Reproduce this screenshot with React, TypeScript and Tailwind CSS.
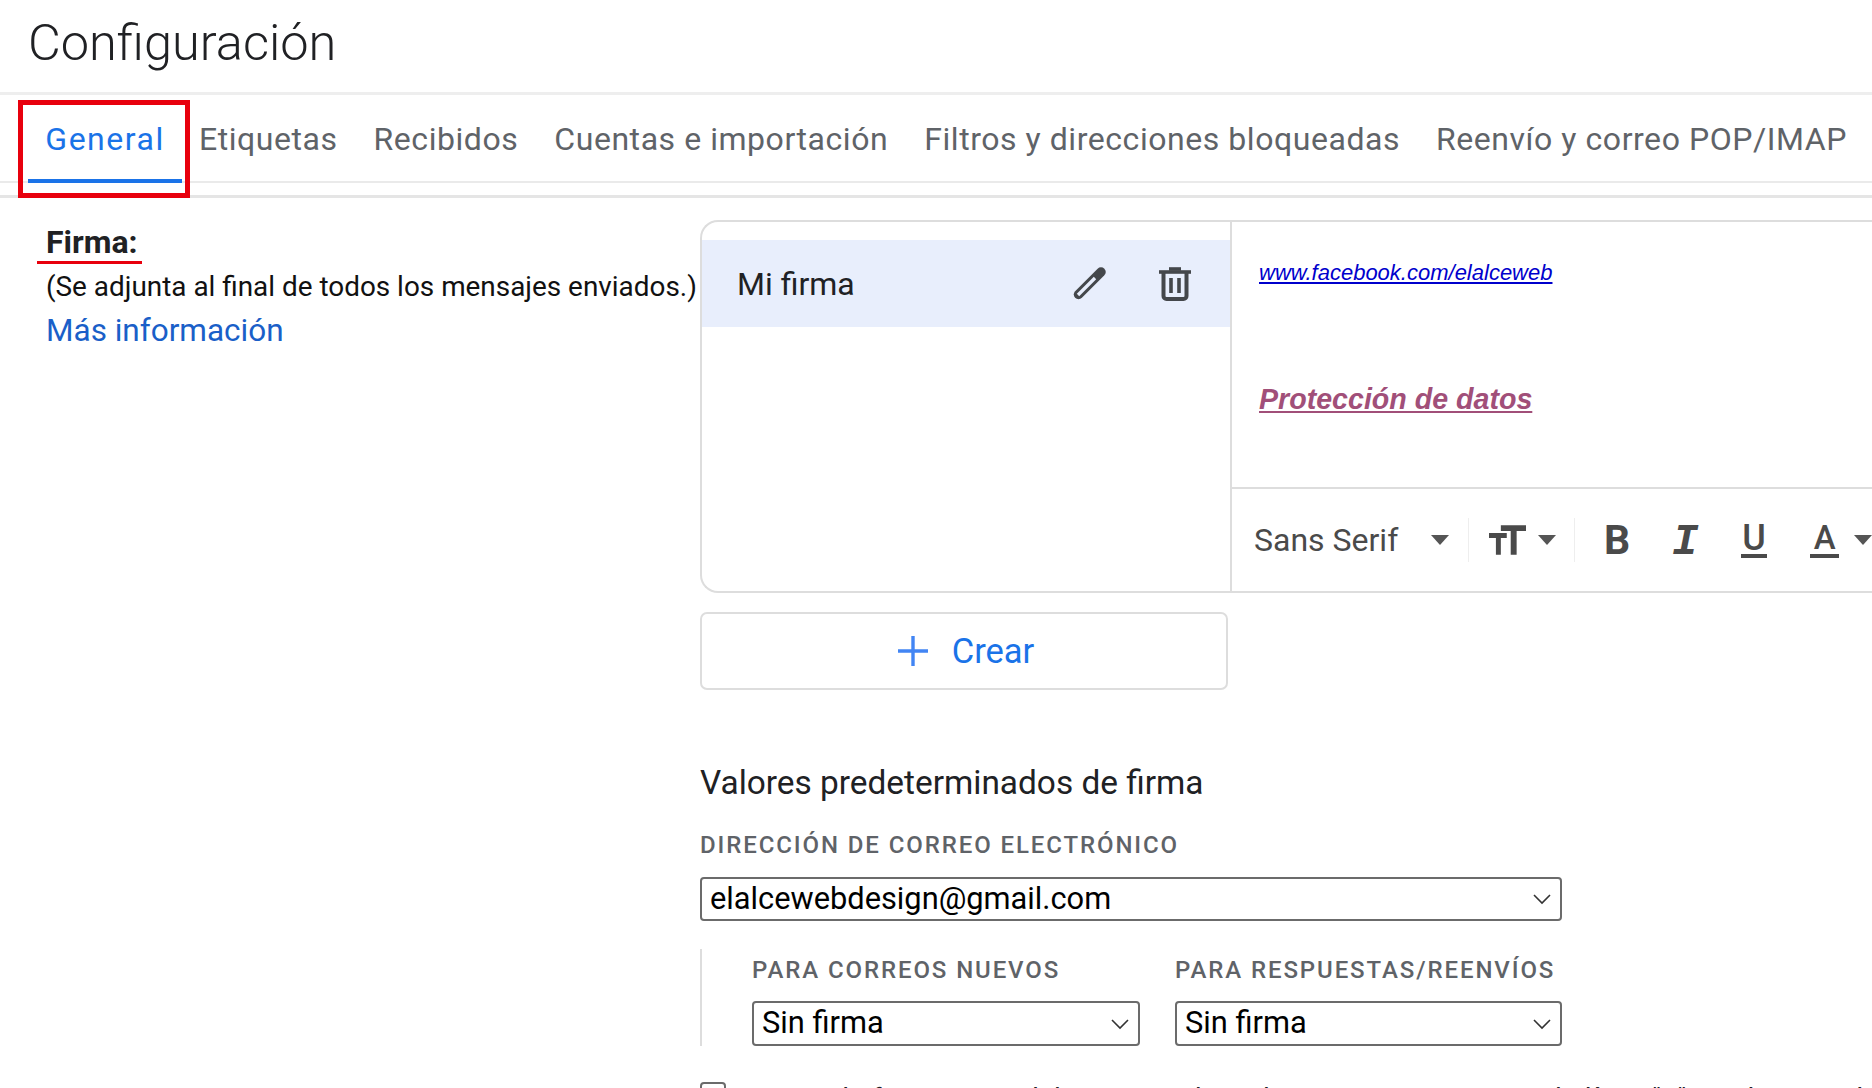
const tabs = ["Etiquetas", "Recibidos", "Cuentas e importación", "Filtros y direcciones bloqueadas", "Reenvío y correo POP/IMAP"];

function Caret() {
  return (
    <svg width="18" height="10" viewBox="0 0 18 10" className="shrink-0 fill-[#555]">
      <path d="M0 0h18L9 10z" />
    </svg>
  );
}

function Pencil() {
  return (
    <svg width="35" height="35" viewBox="0 0 35 35" className="fill-none">
      <path d="M6.5 28.5L29 6" strokeWidth="9.5" strokeLinecap="round" className="stroke-[#44474b]" />
      <path d="M6 29L23 12" strokeWidth="3.4" className="stroke-[#e8eefc]" />
    </svg>
  );
}

function Trash() {
  return (
    <svg width="32" height="35" viewBox="0 0 32 35" className="fill-none stroke-[#44474b]">
      <path d="M0 6h32" strokeWidth="3.6" />
      <path d="M10 3h12" strokeWidth="3.6" />
      <path d="M4.5 7v23a3 3 0 0 0 3 3h17a3 3 0 0 0 3-3V7" strokeWidth="4" />
      <path d="M12 12v15M20 12v15" strokeWidth="3.6" />
    </svg>
  );
}

function SelectBox({ value, className }: { value: string; className: string }) {
  return (
    <div className={`flex items-center justify-between rounded-[4px] border-2 border-[#6b6b6b] pl-[8px] pr-[2px] text-[30.8px] leading-none text-black ${className}`}>
      <span>{value}</span>
      <svg width="32" height="32" viewBox="0 0 24 24" className="fill-none stroke-[#333]" strokeWidth="1.2">
        <path d="M6 9l6 6 6-6" />
      </svg>
    </div>
  );
}

export default function App() {
  return (
    <div className="relative h-[1088px] w-full overflow-hidden bg-white font-['Roboto',sans-serif]">
      <header className="flex h-[95px] items-center border-b-[3px] border-[#eeeeee] pl-[28px] pb-[6px]">
        <h1 className="text-[50.5px] font-[350] leading-none text-[#202124]">Configuración</h1>
      </header>

      <nav className="flex h-[88px] border-b-2 border-[#eaeaea] pl-[28px] text-[32px] tracking-[0.55px] text-[#5f6368]">
        <div className="flex h-[88px] w-[154px] items-center justify-center border-b-4 border-[#1a73e8] pt-[4px] font-[450] tracking-[1.5px] text-[#1a73e8]">General</div>
        <div className="flex h-[86px] gap-[36px] pl-[17px] pt-[2px]">
          {tabs.map((t) => (
            <span key={t} className="flex items-center whitespace-nowrap">
              {t}
            </span>
          ))}
        </div>
      </nav>

      <div className="mt-[12px] border-t-[3px] border-[#e5e5e5]" />

      <main className="flex pt-[22px]">
        <div className="w-[700px] shrink-0 pl-[46px] pt-[4px]">
          <p className="text-[32px] font-bold leading-[36px] text-[#202124]">Firma:</p>
          <p className="mt-[10px] whitespace-nowrap text-[27.9px] leading-[34px] text-[#111]">(Se adjunta al final de todos los mensajes enviados.)</p>
          <a className="mt-[9px] block text-[31.5px] leading-[36px] text-[#1a5fc8]">Más información</a>
        </div>

        <div className="min-w-0 flex-1">
          <section className="flex h-[373px] rounded-l-[18px] border-2 border-r-0 border-[#dddddd]">
            <div className="w-[528px] shrink-0 pt-[18px]">
              <div className="flex h-[87px] items-center bg-[#e8eefc] pl-[35px] pr-[39px]">
                <span className="flex-1 text-[32px] text-[#202124]">Mi firma</span>
                <Pencil />
                <div className="ml-[52px]">
                  <Trash />
                </div>
              </div>
            </div>
            <div className="flex min-w-0 flex-1 flex-col border-l-2 border-[#dddddd]">
              <div className="h-[267px] border-b-2 border-[#dddddd] pl-[27px] font-['Liberation_Sans',sans-serif] italic">
                <a className="mt-[36px] block text-[22px] leading-[30px] text-[#0000cc] underline">www.facebook.com/elalceweb</a>
                <a className="mt-[93px] block text-[28.6px] font-bold leading-[36px] text-[#a14f79] underline">Protección de datos</a>
              </div>
              <div className="flex flex-1 items-center pl-[22px] text-[#4a4a4a]">
                <span className="w-[179px] text-[32px]">Sans Serif</span>
                <Caret />
                <div className="ml-[19px] h-[44px] w-px bg-[#eeeeee]" />
                <svg width="38" height="30" viewBox="0 0 38 30" className="ml-[20px] fill-[#4a4a4a]">
                  <path d="M12 0h26v6H28v24h-6V6H12zM0 8h18v5h-6v17H7V13H0z" />
                </svg>
                <div className="ml-[12px]">
                  <Caret />
                </div>
                <div className="ml-[18px] h-[44px] w-px bg-[#eeeeee]" />
                <span className="ml-[29px] w-[26px] text-[41px] font-bold leading-none">B</span>
                <span className="ml-[42px] w-[28px] pt-[3px] font-['Liberation_Mono',monospace] text-[44px] font-bold italic leading-none">I</span>
                <span className="ml-[41px] flex w-[27px] justify-center border-b-[4px] border-[#4a4a4a] text-[36px] font-medium leading-[32px]">U</span>
                <span className="ml-[43px] flex w-[29px] justify-center border-b-[4px] border-[#4a4a4a] text-[33px] font-medium leading-[32px]">A</span>
                <div className="ml-[15px]">
                  <Caret />
                </div>
              </div>
            </div>
          </section>

          <button className="mt-[19px] flex h-[78px] w-[528px] items-center justify-center gap-[24px] rounded-[7px] border-2 border-[#dddddd] pl-[4px] text-[34.5px] text-[#1a73e8]">
            <svg width="30" height="30" viewBox="0 0 30 30" className="fill-none stroke-[#4285f4]" strokeWidth="3.4">
              <path d="M15 0v30M0 15h30" />
            </svg>
            <span className="pt-[2px]">Crear</span>
          </button>

          <h2 className="mt-[73px] text-[33.4px] font-[450] leading-[40px] text-[#202124]">Valores predeterminados de firma</h2>
          <p className="mt-[28px] text-[24px] font-medium leading-[28px] tracking-[1.9px] text-[#5f6368]">DIRECCIÓN DE CORREO ELECTRÓNICO</p>
          <SelectBox value="elalcewebdesign@gmail.com" className="mt-[18px] h-[44px] w-[862px]" />

          <div className="mt-[28px] flex w-[862px] gap-[35px] border-l-2 border-[#dddddd] pl-[50px] pt-[7px]">
            <div className="w-[388px]">
              <p className="text-[24px] font-medium leading-[28px] tracking-[1.9px] text-[#5f6368]">PARA CORREOS NUEVOS</p>
              <SelectBox value="Sin firma" className="mt-[17px] h-[45px] w-full" />
            </div>
            <div className="flex-1">
              <p className="whitespace-nowrap text-[24px] font-medium leading-[28px] tracking-[1.9px] text-[#5f6368]">PARA RESPUESTAS/REENVÍOS</p>
              <SelectBox value="Sin firma" className="mt-[17px] h-[45px] w-full" />
            </div>
          </div>

          <label className="mt-[36px] flex items-start gap-[11px] whitespace-nowrap text-[28px] tracking-[0.2px] leading-[30px] text-[#202124]">
            <span className="h-[26px] w-[26px] shrink-0 rounded-[4px] border-2 border-[#6b6b6b]" />
            <span className="pt-[2px]">Insertar la firma antes del texto citado en las respuestas y quitar la línea "--" que la precede.</span>
          </label>
        </div>
      </main>

      {/* red annotations drawn over the screenshot */}
      <div className="absolute left-[18px] top-[100px] h-[98px] w-[172px] border-[5px] border-[#e8000d]" />
      <div className="absolute left-[37px] top-[261px] h-[3px] w-[105px] bg-[#e8000d]" />
    </div>
  );
}
